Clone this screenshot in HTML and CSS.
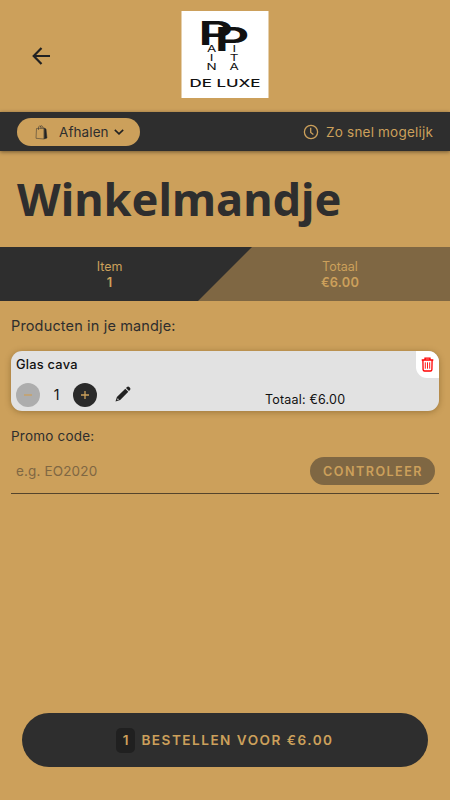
FILE: index.html
```html
<!DOCTYPE html>
<html lang="nl">
<head>
<meta charset="utf-8">
<title>Winkelmandje</title>
<link rel="stylesheet" href="styles.css">
</head>
<body>
<header class="header">
  <svg class="back" viewBox="0 0 20 20"><path d="M18 10H2M9.5 2L1.7 10L9.5 18"/></svg>
  <svg class="logo" viewBox="0 0 88 87">
    <rect x=".5" width="87" height="87" fill="#fff"/>
    <text class="logo-p" transform="translate(17 34) scale(1.66 1)" font-size="33">P</text>
    <text class="logo-p" transform="translate(33.3 39.5) scale(1.66 1)" font-size="33">P</text>
    <g class="logo-small">
      <text transform="translate(30.6 40.8) scale(1.5 1)" text-anchor="middle">A</text>
      <text transform="translate(30.6 49.8) scale(1.5 1)" text-anchor="middle">I</text>
      <text transform="translate(30.6 59) scale(1.5 1)" text-anchor="middle">N</text>
      <text transform="translate(53.2 40.8) scale(1.5 1)" text-anchor="middle">I</text>
      <text transform="translate(53.2 49.8) scale(1.5 1)" text-anchor="middle">T</text>
      <text transform="translate(53.2 59) scale(1.5 1)" text-anchor="middle">A</text>
    </g>
    <text class="logo-name" x="8.5" y="75.8" textLength="71" lengthAdjust="spacingAndGlyphs">DE LUXE</text>
  </svg>
</header>
<div class="bar">
  <button class="mode">
    <svg class="bag" viewBox="0 0 13 16"><path d="M1.5 4.5L9 4L9 15L1 14.3Z M3.5 6V3Q4.5 .8 6 2.5V5M5 3Q7 .2 8 3V5"/><path class="side" d="M9.3 4L11 5L12 14L9.3 15Z"/></svg>
    <span>Afhalen</span>
    <svg class="chevron" viewBox="0 0 10 6"><path d="M.8 .8L5 4.8L9.2 .8"/></svg>
  </button>
  <div class="time">
    <svg class="clock" viewBox="0 0 16 16"><circle cx="8" cy="8" r="6.6"/><path d="M7.7 3.8V8.5L10.4 10.5"/></svg>
    <span>Zo snel mogelijk</span>
  </div>
</div>
<h1 class="title">Winkelmandje</h1>
<section class="summary">
  <div class="count"><span>Item</span><b>1</b></div>
  <div class="sum"><span>Totaal</span><b>€6.00</b></div>
</section>
<main class="content">
  <p class="products-label">Producten in je mandje:</p>
  <article class="card">
    <div class="name">Glas cava</div>
    <div class="controls">
      <button class="round off"><svg viewBox="0 0 10 10"><path d="M1 5H9"/></svg></button>
      <span class="qty">1</span>
      <button class="round"><svg viewBox="0 0 10 10"><path d="M1 5H9M5 1V9"/></svg></button>
      <svg class="pencil" viewBox="0 0 16 16"><path fill-rule="evenodd" d="M11 2L12 1Q13.2 0 14.2 1L15.1 1.9Q16 2.9 15 4L14 5ZM10.3 2.7L13.3 5.7L5.2 14L.5 15.6L1.9 10.9ZM2.8 12.2L2.1 14.1L4 13.4Z"/></svg>
      <span class="line-total">Totaal: €6.00</span>
    </div>
    <button class="delete"><svg viewBox="0 0 13 15"><path d="M.7 3H12.3M4 3V1.2H9V3M1.9 3L2.1 12.6Q2.2 14 3.5 14H9.5Q10.8 14 10.9 12.6L11.1 3"/><path class="slats" d="M4.3 5.3V11.7M6.5 5.3V11.7M8.7 5.3V11.7"/></svg></button>
  </article>
  <p class="promo-label">Promo code:</p>
  <div class="promo">
    <span class="hint">e.g. EO2020</span>
    <button class="check">CONTROLEER</button>
  </div>
</main>
<footer class="footer">
  <button class="order"><span class="badge">1</span><span class="order-text">BESTELLEN VOOR €6.00</span></button>
</footer>
</body>
</html>
```

FILE: styles.css
```css
* { box-sizing: border-box; }
body {
  margin: 0;
  height: 800px;
  display: flex;
  flex-direction: column;
  overflow: hidden;
  background: #cca05b;
  color: #2e2e2e;
  font-family: Inter, "Liberation Sans", sans-serif;
  font-size: 14px;
}
button { border: 0; padding: 0; font: inherit; color: inherit; }
p { margin: 0; }
svg { display: block; fill: none; stroke: currentColor; flex: none; }

.header { height: 112px; padding: 11px 0 0 32px; display: flex; align-items: flex-start; }
.back { width: 20px; height: 20px; margin: 35px 0 0 0; color: #222; stroke-width: 2.2; }
.logo { width: 88px; height: 87px; margin-left: 129px; stroke: none; fill: #111; }
.logo-p { font-family: Inter, sans-serif; font-weight: 600; }
.logo-small { font-size: 9px; }
.logo-name { font-size: 10.8px; font-weight: 500; }

.bar {
  height: 39px;
  padding: 0 17px;
  display: flex;
  align-items: center;
  justify-content: space-between;
  background: #2e2e2e;
  box-shadow: 0 1px 4px rgba(0, 0, 0, .45);
}
.mode {
  width: 123px;
  height: 28px;
  padding-left: 18px;
  display: flex;
  align-items: center;
  border-radius: 14px;
  background: #cca05b;
  font-size: 13.5px;
  letter-spacing: .1px;
}
.bag { width: 13px; height: 16px; margin-right: 11px; stroke-width: .5; }
.bag .side { fill: #222; }
.chevron { width: 10px; height: 6px; margin-left: 5px; color: #222; stroke-width: 1.6; }
.time { display: flex; align-items: center; gap: 7px; color: #cca05b; font-size: 13.5px; letter-spacing: .2px; }
.clock { width: 16px; height: 16px; stroke-width: 1.3; }

.title {
  margin: 0;
  height: 96px;
  padding-left: 17px;
  font: bold 45.2px/96px "Noto Sans", sans-serif;
}
.summary {
  position: relative;
  height: 54px;
  display: grid;
  grid-template-columns: 219px 242px;
  background: #7f6743;
  color: #cca05b;
  font-size: 13px;
  line-height: 16px;
  text-align: center;
}
.summary::before {
  content: "";
  position: absolute;
  inset: 0;
  background: #2e2e2e;
  clip-path: polygon(0 0, 252px 0, 198px 100%, 0 100%);
}
.count, .sum { position: relative; padding-top: 12px; display: flex; flex-direction: column; font-size: 12.5px; }
.summary b { font-size: 12.8px; font-weight: 600; letter-spacing: .2px; }

.content { padding: 0 11px; }
.products-label { padding-top: 15px; height: 50px; line-height: 20px; font-size: 14.5px; letter-spacing: .15px; }
.card {
  position: relative;
  height: 60px;
  padding: 5px 5px 0;
  border-radius: 11px;
  background: #e2e2e2;
  color: #111;
  box-shadow: 0 1px 6px rgba(80, 55, 10, .4);
}
.name { height: 26px; font-size: 12.8px; font-weight: 500; line-height: 17px; letter-spacing: .25px; }
.controls { display: flex; align-items: center; height: 25px; }
.round {
  width: 24px;
  height: 24px;
  display: flex;
  align-items: center;
  justify-content: center;
  border-radius: 50%;
  background: #2a2a2a;
  color: #cca05b;
}
.round.off { background: #adadad; }
.round svg { width: 10px; height: 10px; stroke-width: 1.3; }
.qty { width: 33px; text-align: center; }
.pencil { width: 16px; height: 16px; margin: -1px 0 0 18px; fill: #222; stroke: none; }
.line-total { margin: 9px 0 0 134px; font-size: 12.5px; letter-spacing: .2px; }
.delete {
  position: absolute;
  top: 0;
  right: 0;
  width: 23px;
  height: 27px;
  display: flex;
  align-items: center;
  justify-content: center;
  border-radius: 0 11px 0 11px;
  background: #fff;
  color: #f00;
}
.delete svg { width: 13px; height: 15px; stroke-width: 1.3; }
.slats { stroke-width: .9; }

.promo-label { padding-top: 15px; line-height: 20px; font-size: 13.5px; letter-spacing: .2px; }
.promo {
  height: 48px;
  padding: 3px 4px 0 5px;
  display: flex;
  align-items: center;
  justify-content: space-between;
  border-bottom: 1px solid #54442c;
}
.hint { color: #7f6743; font-size: 13.5px; letter-spacing: .15px; }
.check {
  width: 125px;
  height: 28px;
  padding-left: 1px;
  border-radius: 14px;
  background: #7f6743;
  color: #cca05b;
  font-size: 12.6px;
  font-weight: 600;
  letter-spacing: 1.45px;
}
.footer { margin-top: auto; padding: 0 22px 33px; }
.order {
  width: 406px;
  height: 54px;
  display: flex;
  align-items: center;
  justify-content: center;
  gap: 6px;
  border-radius: 27px;
  background: #2e2e2e;
  color: #cca05b;
  font-size: 13.6px;
  font-weight: 600;
  letter-spacing: 1.48px;
}
.badge { width: 19px; height: 25px; line-height: 25px; padding-left: 1px; border-radius: 5px; background: #202020; }
```
